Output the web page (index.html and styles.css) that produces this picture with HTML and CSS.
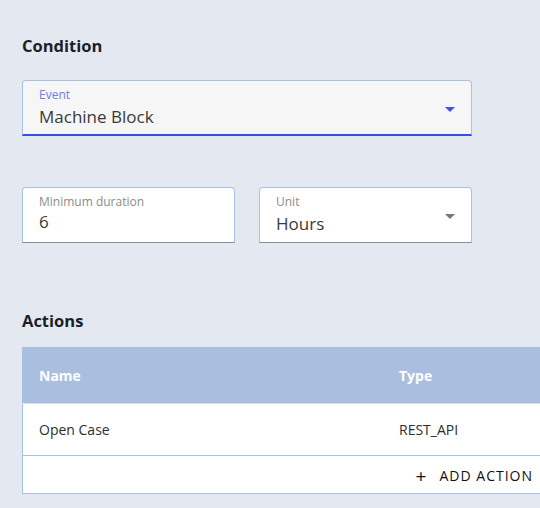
FILE: index.html
```html
<!DOCTYPE html>
<html>
<head>
<meta charset="utf-8">
<link rel="stylesheet" href="styles.css">
</head>
<body>
<div class="page">
  <h2 class="section-title title-condition">Condition</h2>
  <div class="field select filled-blue wide">
    <div class="field-label label-blue">Event</div>
    <div class="field-value">Machine Block</div>
    <span class="arrow arrow-blue"></span>
  </div>
  <div class="field-row">
    <div class="field outlined half">
      <div class="field-label">Minimum duration</div>
      <div class="field-value">6</div>
    </div>
    <div class="field outlined half select">
      <div class="field-label">Unit</div>
      <div class="field-value">Hours</div>
      <span class="arrow arrow-gray"></span>
    </div>
  </div>
  <h2 class="section-title title-actions">Actions</h2>
  <div class="table">
    <div class="tr thead">
      <div class="td col-name">Name</div>
      <div class="td col-type">Type</div>
    </div>
    <div class="tr tbody">
      <div class="td col-name">Open Case</div>
      <div class="td col-type">REST_API</div>
    </div>
    <div class="tfoot">
      <button class="add-btn"><span class="plus">+</span>ADD ACTION</button>
    </div>
  </div>
</div>
</body>
</html>
```
FILE: styles.css
```css
html, body {
  margin: 0;
  padding: 0;
  background: #e4e9f1;
  overflow: hidden;
}
body {
  width: 540px;
  height: 508px;
  font-family: "Open Sans", "Noto Sans", sans-serif;
}
.page {
  padding: 36px 0 0 22px;
  width: 600px;
}
.section-title {
  margin: 0;
  font-size: 16.5px;
  font-weight: 700;
  line-height: 20px;
  color: #1b1f29;
}
.title-condition { margin-bottom: 24px; }
.title-actions { margin-top: 68px; margin-bottom: 16px; }

.field {
  position: relative;
  box-sizing: border-box;
  height: 56px;
  border: 1px solid #a9c0e2;
  border-radius: 4px 4px 0 0;
  padding: 6px 16px 0 16px;
}
.field.wide { width: 450px; }
.field.half { width: 213px; }
.filled-blue {
  background: #f6f6f6;
  border-bottom: 2px solid #3a4fe0;
}
.outlined {
  background: #ffffff;
  border-bottom: 1px solid #8e8e8e;
}
.field-label {
  font-size: 12px;
  line-height: 16px;
  color: #8c8c8c;
}
.label-blue { color: #6f7ee9; }
.field-value {
  font-size: 17px;
  line-height: 24px;
  color: #3a3a3a;
}
.select .field-value { padding-top: 2px; }
.arrow {
  position: absolute;
  right: 16px;
  top: 26px;
  width: 0;
  height: 0;
  border-left: 5px solid transparent;
  border-right: 5px solid transparent;
}
.arrow-blue { border-top: 5px solid #3b55e6; }
.arrow-gray { border-top: 5px solid #757575; }

.field-row {
  display: flex;
  gap: 24px;
  margin-top: 51px;
}

.table {
  width: 526px;
  border: 1px solid #a9c0e2;
  border-top: none;
  background: #fff;
  font-size: 14px;
}
.tr {
  display: flex;
  align-items: center;
}
.td { padding-left: 16px; box-sizing: border-box; }
.col-name { width: 360px; }
.col-type { flex: 1; }
.thead {
  height: 57px;
  background: #aabfdf;
  color: #ffffff;
  font-weight: 700;
  margin: 0 -1px;
  padding: 0 1px;
  border-bottom: 1px solid #d6e0ef;
  box-sizing: border-box;
}
.tbody {
  height: 52px;
  color: #2d2d2d;
  border-bottom: 1px solid #a9c0e2;
  box-sizing: border-box;
}
.tfoot {
  height: 37px;
  display: flex;
  justify-content: flex-end;
  align-items: center;
  padding-right: 8px;
}
.add-btn {
  font-family: "Open Sans", "Noto Sans", sans-serif;
  font-size: 14px;
  font-weight: 500;
  letter-spacing: 1px;
  color: #111111;
  background: none;
  border: none;
  padding: 2px 8px 0 8px;
  display: flex;
  align-items: center;
}
.plus {
  font-size: 19px;
  margin-right: 13px;
  letter-spacing: 0;
}
```
